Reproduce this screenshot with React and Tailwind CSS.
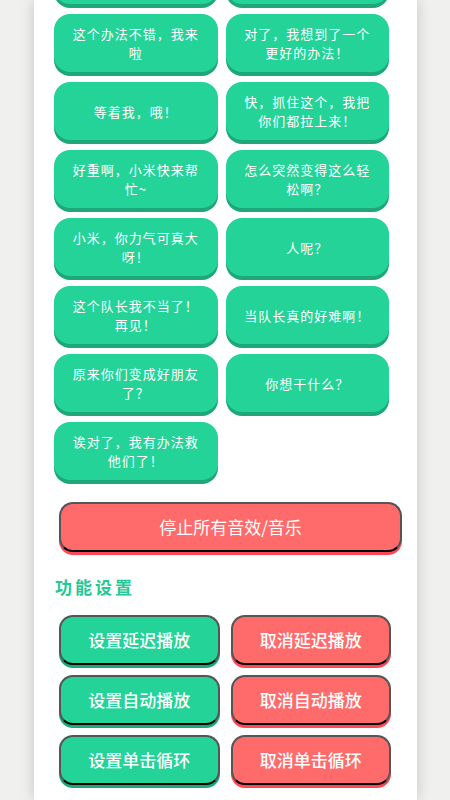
import React from "react";

// Sound clip labels, two per row
const clips = [
  "这个办法不错，我来啦",
  "对了，我想到了一个更好的办法！",
  "等着我，哦！",
  "快，抓住这个，我把你们都拉上来！",
  "好重啊，小米快来帮忙~",
  "怎么突然变得这么轻松啊？",
  "小米，你力气可真大呀！",
  "人呢？",
  "这个队长我不当了！再见！",
  "当队长真的好难啊！",
  "原来你们变成好朋友了？",
  "你想干什么？",
  "诶对了，我有办法救他们了！",
];

const settings = [
  ["设置延迟播放", "取消延迟播放"],
  ["设置自动播放", "取消自动播放"],
  ["设置单击循环", "取消单击循环"],
];

const FONT = { fontFamily: '"Noto Sans CJK SC", "Noto Sans", sans-serif' };

function ClipButton({ label }) {
  return (
    <button className="h-[58px] rounded-[16px] bg-[#23d398] shadow-[0_4px_0_#1fa77b] px-[14px] text-[13px] leading-[19px] tracking-[1px] text-white flex items-center justify-center text-center">
      {label}
    </button>
  );
}

function SettingButton({ label, danger }) {
  return (
    <button
      className={
        danger
          ? "h-[50px] rounded-[14px] border-2 border-[#555] border-b-black bg-[#ff6b6b] shadow-[0_3px_0_#ff4757] text-[17px] font-medium text-white"
          : "h-[50px] rounded-[14px] border-2 border-[#555] border-b-black bg-[#23d398] shadow-[0_3px_0_#1fa77b] text-[17px] font-medium text-white"
      }
    >
      {label}
    </button>
  );
}

export default function App() {
  return (
    <div className="h-[800px] overflow-hidden bg-[#f0f0ee]" style={FONT}>
      <div className="mx-[34px] w-[383px] h-[800px] bg-white shadow-[0_0_14px_rgba(0,0,0,0.18)] overflow-hidden">
        {/* clip grid, scrolled so the row above is mostly out of view */}
        <div className="-mt-[54px] pl-[20px] w-[355px] grid grid-cols-2 gap-x-[8px] gap-y-[10px]">
          <ClipButton label="" />
          <ClipButton label="" />
          {clips.map((c) => (
            <ClipButton key={c} label={c} />
          ))}
        </div>

        <div className="mt-[22px] pl-[25px] pr-[15px]">
          <button className="w-full h-[50px] rounded-[14px] border-2 border-[#555] border-b-black bg-[#ff6b6b] shadow-[0_3px_0_#ff4757] text-[17px] text-white">
            停止所有音效/音乐
          </button>
        </div>

        <h2 className="mt-[22px] pl-[21px] text-[17px] font-bold tracking-[3px] text-[#23c994]">
          功能设置
        </h2>

        <div className="mt-[15px] pl-[25px] w-[357px] grid grid-cols-2 gap-x-[11px] gap-y-[10px]">
          {settings.map(([on, off]) => (
            <React.Fragment key={on}>
              <SettingButton label={on} />
              <SettingButton label={off} danger />
            </React.Fragment>
          ))}
        </div>
      </div>
    </div>
  );
}
